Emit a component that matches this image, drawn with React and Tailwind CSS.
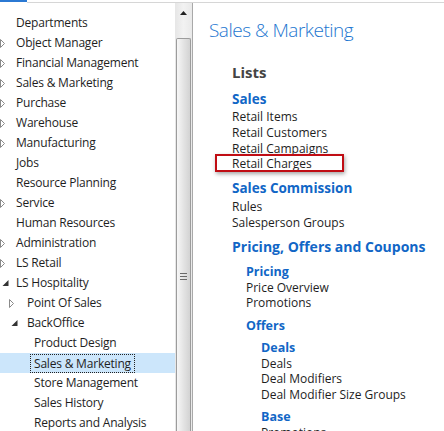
import React from "react";

const tree = [
  { level: 1, label: "Departments" },
  { level: 1, label: "Object Manager", node: "closed" },
  { level: 1, label: "Financial Management", node: "closed" },
  { level: 1, label: "Sales & Marketing", node: "closed" },
  { level: 1, label: "Purchase", node: "closed" },
  { level: 1, label: "Warehouse", node: "closed" },
  { level: 1, label: "Manufacturing", node: "closed" },
  { level: 1, label: "Jobs" },
  { level: 1, label: "Resource Planning" },
  { level: 1, label: "Service", node: "closed" },
  { level: 1, label: "Human Resources" },
  { level: 1, label: "Administration", node: "closed" },
  { level: 1, label: "LS Retail", node: "closed" },
  { level: 1, label: "LS Hospitality", node: "open" },
  { level: 2, label: "Point Of Sales", node: "closed" },
  { level: 2, label: "BackOffice", node: "open" },
  { level: 3, label: "Product Design" },
  { level: 3, label: "Sales & Marketing", selected: true },
  { level: 3, label: "Store Management" },
  { level: 3, label: "Sales History" },
  { level: 3, label: "Reports and Analysis" },
];

// indent per level: [row padding, expander box width]
const indent = {
  1: { row: "pl-0", box: "w-[16px]" },
  2: { row: "pl-[9px]", box: "w-[18px]" },
  3: { row: "pl-[20px]", box: "w-[14px]" },
};

function Expander({ node }) {
  if (node === "closed") {
    return (
      <svg width="6" height="9" viewBox="0 0 6 9">
        <path d="M0.5 0.5 L4.5 4.5 L0.5 8.5 Z" fill="white" stroke="#8a8a8a" />
      </svg>
    );
  }
  if (node === "open") {
    return (
      <svg width="8" height="8" viewBox="0 0 8 8" className="ml-[2px]">
        <path d="M6.5 1 L6.5 7 L0.5 7 Z" fill="#333" />
      </svg>
    );
  }
  return null;
}

function TreeRow({ item }) {
  const ind = indent[item.level];
  return (
    <div
      className={`flex items-center h-[20px] ${ind.row} ${
        item.selected ? "bg-[#cce6fb]" : ""
      }`}
    >
      <div className={`${ind.box} shrink-0 flex items-center`}>
        <Expander node={item.node} />
      </div>
      {item.selected ? (
        <span className="-ml-[4px] px-[3px] h-[19px] leading-[17px] border border-dotted border-[#222] whitespace-nowrap">
          {item.label}
        </span>
      ) : (
        <span className="whitespace-nowrap">{item.label}</span>
      )}
    </div>
  );
}

function Scrollbar() {
  return (
    <div className="w-[18px] shrink-0 flex flex-col bg-gradient-to-r from-[#e6e6e6] via-[#f2f2f2] to-[#e9e9e9] border-r border-[#a9a9a9]">
      <div className="h-[20px] flex items-center justify-center">
        <svg width="7" height="4" viewBox="0 0 7 4">
          <path d="M3.5 0 L7 4 L0 4 Z" fill="#222" />
        </svg>
      </div>
      <div className="mt-[15px] ml-px mr-[1px] flex-1 border border-b-0 border-[#9c9c9c] rounded-t-[2px] bg-gradient-to-r from-[#f7f7f7] via-[#e4e4e4] to-[#d3d3d3]">
        <div className="mt-[234px] mx-auto w-[7px] flex flex-col gap-[2px]">
          <div className="h-px bg-[#6a6a6a]" />
          <div className="h-px bg-[#6a6a6a]" />
          <div className="h-px bg-[#6a6a6a]" />
        </div>
      </div>
    </div>
  );
}

function Heading({ children, className }) {
  return (
    <div className={`font-bold text-[#1166c6] ${className}`}>{children}</div>
  );
}

function Item({ children }) {
  return <div className="text-[12px] leading-[15.75px] text-[#1e1e1e]">{children}</div>;
}

export default function App() {
  return (
    <div
      className="w-[444px] h-[431px] overflow-hidden bg-white flex flex-col text-[12px] text-[#1e1e1e]"
      style={{ fontFamily: '"Open Sans", "Noto Sans", sans-serif' }}
    >
      <div className="h-[3px] flex shrink-0">
        <div className="w-[27px] h-[2px] bg-[#2b79d3]" />
        <div className="flex-1 border-b border-[#d6d6d6]" />
      </div>

      <div className="flex flex-1 min-h-0">
        <div className="w-[175px] shrink-0 pt-[10px] overflow-hidden tracking-[-0.2px]">
          {tree.map((item, i) => (
            <TreeRow key={i} item={item} />
          ))}
        </div>
        <Scrollbar />

        <div className="flex-1 pl-[16px] overflow-hidden">
          <div className="mt-[13px] text-[19px] leading-[28px] font-light text-[#1c76d0] tracking-[-0.5px]">
            Sales &amp; Marketing
          </div>

          <div className="pl-[23px]">
            <div className="mt-[18px] text-[15px] leading-[20px] font-bold text-[#444]">
              Lists
            </div>

            <Heading className="mt-[7px] text-[13.5px] leading-[20px]">Sales</Heading>
            <Item>Retail Items</Item>
            <Item>Retail Customers</Item>
            <Item>Retail Campaigns</Item>
            <div className="relative">
              <Item>Retail Charges</Item>
              <div className="absolute -left-[17px] top-[-2px] w-[129px] h-[18px] border-2 border-[#c00d14] shadow-[1px_2px_4px_rgba(0,0,0,0.35)]" />
            </div>

            <Heading className="mt-[6px] text-[13.5px] leading-[21px]">
              Sales Commission
            </Heading>
            <Item>Rules</Item>
            <Item>Salesperson Groups</Item>

            <Heading className="mt-[6px] text-[14px] leading-[20px]">
              Pricing, Offers and Coupons
            </Heading>

            <div className="pl-[14px]">
              <Heading className="mt-[6px] text-[12.5px] leading-[17px]">Pricing</Heading>
              <Item>Price Overview</Item>
              <Item>Promotions</Item>

              <Heading className="mt-[5.5px] text-[12.5px] leading-[17px]">Offers</Heading>

              <div className="pl-[15px]">
                <Heading className="mt-[5px] text-[12.5px] leading-[17px]">Deals</Heading>
                <Item>Deals</Item>
                <Item>Deal Modifiers</Item>
                <Item>Deal Modifier Size Groups</Item>

                <Heading className="mt-[5px] text-[12.5px] leading-[17px]">Base</Heading>
                <Item>Promotions</Item>
              </div>
            </div>
          </div>
        </div>
      </div>
    </div>
  );
}
